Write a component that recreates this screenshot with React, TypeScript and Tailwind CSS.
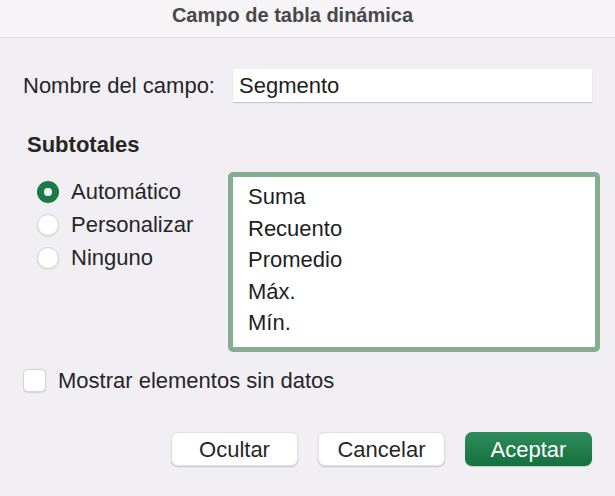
import React from "react";

const font = { fontFamily: '"Liberation Sans", Arial, sans-serif' };

function Radio({ checked, label }: { checked?: boolean; label: string }) {
  return (
    <div className="flex items-center h-[33px]">
      {checked ? (
        <div className="w-[22px] h-[22px] rounded-full bg-[#1c7a48] flex items-center justify-center">
          <div className="w-[8px] h-[8px] rounded-full bg-white" />
        </div>
      ) : (
        <div className="w-[22px] h-[22px] rounded-full bg-white border border-[#d6d4d8] shadow-[0_0.5px_1px_rgba(0,0,0,0.12)]" />
      )}
      <span className="ml-[12px] text-[22px] text-[#262626]">{label}</span>
    </div>
  );
}

function Button({ label, primary }: { label: string; primary?: boolean }) {
  return primary ? (
    <button className="w-[127px] h-[34px] rounded-[7px] bg-gradient-to-b from-[#2e8c5b] to-[#15703f] text-white text-[22px] shadow-[0_1px_1px_rgba(0,0,0,0.15)]">
      {label}
    </button>
  ) : (
    <button className="w-[127px] h-[34px] rounded-[7px] bg-white text-[#262626] text-[22px] border border-[#e2e0e4] shadow-[0_1px_1.5px_rgba(0,0,0,0.18)]">
      {label}
    </button>
  );
}

export default function App() {
  return (
    <div style={font} className="w-[615px] h-[496px] bg-[#f1eff3] flex flex-col overflow-hidden">
      <div className="h-[38px] bg-[#f7f4f7] border-b border-[#dcdadd] flex items-start justify-center pt-[3px]">
        <span className="text-[20px] leading-[24px] font-bold text-[#484848] -ml-[30px]">Campo de tabla dinámica</span>
      </div>
      <div className="flex items-center mt-[31px] pl-[23px]">
        <span className="text-[22px] text-[#262626]">Nombre del campo:</span>
        <div className="ml-[18px] w-[359px] h-[33px] bg-white shadow-[0_1px_1px_rgba(0,0,0,0.18)] flex items-center pl-[6px]">
          <span className="text-[22px] text-[#1e1e1e]">Segmento</span>
        </div>
      </div>
      <div className="mt-[30px] pl-[27px] text-[22px] font-bold text-[#262626] leading-[26px]">Subtotales</div>
      <div className="flex mt-[14px]">
        <div className="pl-[37px] pt-[3px] w-[228px]">
          <Radio checked label="Automático" />
          <Radio label="Personalizar" />
          <Radio label="Ninguno" />
        </div>
        <div className="w-[372px] h-[180px] rounded-[5px] border-[5px] border-[#86ad90] bg-white pl-[15px] pt-[4px]">
          {["Suma", "Recuento", "Promedio", "Máx.", "Mín."].map((t) => (
            <div key={t} className="h-[31.5px] flex items-center text-[22px] text-[#1e1e1e]">
              {t}
            </div>
          ))}
        </div>
      </div>
      <div className="flex items-center mt-[12px] pl-[23px]">
        <div className="w-[23px] h-[23px] rounded-[5px] bg-white border border-[#d6d4d8] shadow-[0_0.5px_1px_rgba(0,0,0,0.12)]" />
        <span className="ml-[12px] text-[22px] text-[#262626]">Mostrar elementos sin datos</span>
      </div>
      <div className="flex justify-end gap-[20px] pr-[23px] mt-[35px]">
        <Button label="Ocultar" />
        <Button label="Cancelar" />
        <Button label="Aceptar" primary />
      </div>
    </div>
  );
}
